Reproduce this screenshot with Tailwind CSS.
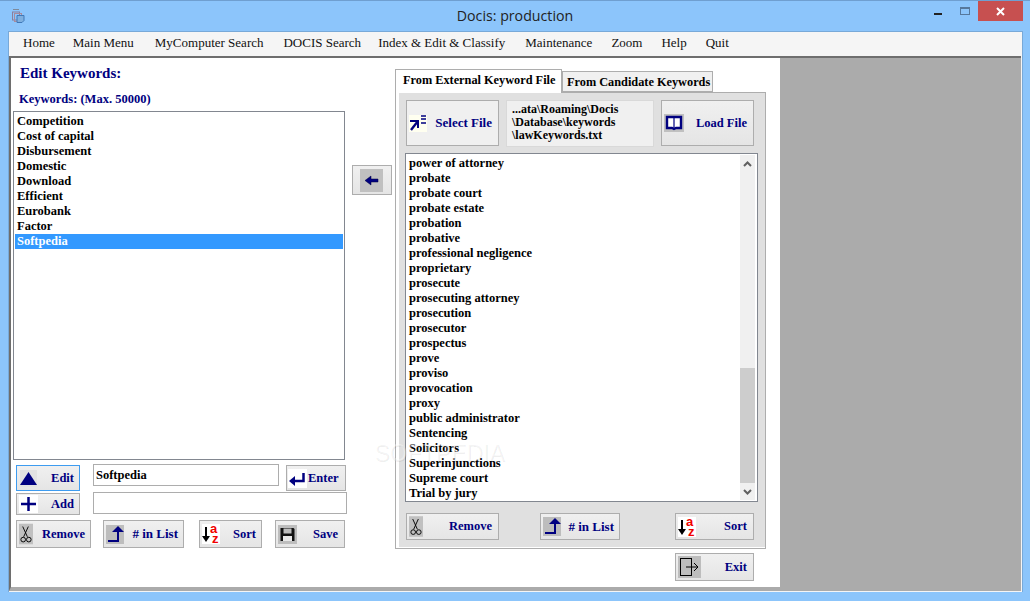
<!DOCTYPE html>
<html>
<head>
<meta charset="utf-8">
<script src="https://cdn.jsdelivr.net/npm/@tailwindcss/browser@4"></script>
</head>
<body class="m-0">
<div class="relative w-[1030px] h-[601px] overflow-hidden bg-[#8cc5fb] font-['Liberation_Serif',serif] flex flex-col">
  <!-- title bar -->
  <div class="relative h-[31px] shrink-0 flex items-center justify-center border-t border-[#6f9fd0]">
    <svg class="absolute left-[12px] top-[8px]" width="13" height="14" viewBox="0 0 13 14" fill="none"><rect x="0.5" y="3" width="7" height="8" stroke="#8a7f9c"/><rect x="2.5" y="4.5" width="7" height="8" stroke="#a88a9c"/><path d="M5 6.5h7v5l-2 2H5z" fill="#7eb0e0" stroke="#3f78b8"/><path d="M1 0.5h6" stroke="#7d8a9c"/></svg>
    <span class="font-['Open_Sans',sans-serif] text-[14.2px] text-[#222] -mt-[1px]">Docis: production</span>
    <div class="absolute left-[934px] top-[12px] w-[8px] h-[2px] bg-[#222]"></div>
    <div class="absolute left-[960px] top-[6px] w-[10px] h-[8px] border border-[#56789c] border-t-2"></div>
    <div class="absolute left-[978px] top-0 w-[45px] h-[20px] bg-[#c75050] flex items-center justify-center">
      <svg width="9" height="9" viewBox="0 0 9 9"><path d="M1 1l7 7M8 1L1 8" stroke="#fff" stroke-width="2"/></svg>
    </div>
  </div>
  <!-- client -->
  <div class="ml-[8px] w-[1015px] h-[561px] shrink-0 bg-white border-t border-l border-r border-[#78a9d8] flex flex-col">
    <!-- menu -->
    <div class="h-[24px] shrink-0 bg-[#f5f5f5] flex items-center pl-[14px] pb-[2px] text-[13px] text-[#111]">
      <span>Home</span>
      <span class="ml-[18px]">Main Menu</span>
      <span class="ml-[21px]">MyComputer Search</span>
      <span class="ml-[20px]">DOCIS Search</span>
      <span class="ml-[17px]">Index &amp; Edit &amp; Classify</span>
      <span class="ml-[20px]">Maintenance</span>
      <span class="ml-[19px]">Zoom</span>
      <span class="ml-[19px]">Help</span>
      <span class="ml-[19px]">Quit</span>
    </div>
    <div class="flex-1 min-h-0 flex flex-col pr-[1px] pb-[1px] bg-[#f5f5f5]">
      <div class="flex-1 min-h-0 flex border-t-2 border-l-2 border-[#6e6e6e] border-b-4 border-b-[#ababab] bg-white">
        <!-- left column -->
        <div class="w-[339px] shrink-0 flex flex-col pl-[2px]">
          <div class="pl-[7px] h-[29px] pt-[5px] text-[15px] leading-[20px] font-bold text-[#000080]">Edit Keywords:</div>
          <div class="pl-[6px] h-[24px] pt-[4px] text-[12.5px] leading-[16px] font-bold text-[#000080]">Keywords: (Max. 50000)</div>
          <div class="w-[332px] h-[349px] border border-[#828790] pt-[2px] px-[1px] text-[12.5px] font-bold text-black leading-[15px]">
            <div class="h-[15px] pl-[2px]">Competition</div>
            <div class="h-[15px] pl-[2px]">Cost of capital</div>
            <div class="h-[15px] pl-[2px]">Disbursement</div>
            <div class="h-[15px] pl-[2px]">Domestic</div>
            <div class="h-[15px] pl-[2px]">Download</div>
            <div class="h-[15px] pl-[2px]">Efficient</div>
            <div class="h-[15px] pl-[2px]">Eurobank</div>
            <div class="h-[15px] pl-[2px]">Factor</div>
            <div class="h-[15px] pl-[2px] bg-[#3399ff] text-white">Softpedia</div>
          </div>
          <div class="flex mt-[4px] h-[27px] pl-[3px] items-start">
            <button class="w-[64px] h-[26px] mt-[1px] border border-[#3e9cf0] bg-gradient-to-b from-[#f0f0f0] to-[#e5e5e5] flex items-center pl-[3px] pr-[5px] justify-between text-[12.5px] font-bold text-[#000080]">
              <svg width="17" height="17" viewBox="0 0 17 17"><rect width="17" height="17" fill="#e2e2e2"/><path d="M8.5 2L17 15H0z" fill="#000080"/></svg><span>Edit</span>
            </button>
            <div class="ml-[13px] w-[186px] h-[22px] border border-[#adadad] bg-white pl-[2px] text-[12.5px] leading-[20px] font-bold text-black">Softpedia</div>
            <button class="ml-[7px] w-[60px] h-[26px] mt-[1px] border border-[#adadad] bg-gradient-to-b from-[#f0f0f0] to-[#e5e5e5] flex items-center pl-[1px] text-[12.5px] font-bold text-[#000080]">
              <svg width="19" height="19" viewBox="0 0 19 19"><rect width="19" height="19" fill="#fff"/><path d="M15.5 4v8H5" fill="none" stroke="#000080" stroke-width="2.5"/><path d="M1 12l6-5v10z" fill="#000080"/></svg><span class="ml-[1px]">Enter</span>
            </button>
          </div>
          <div class="flex mt-[1px] h-[23px] pl-[3px] items-start">
            <button class="w-[64px] h-[22px] mt-[1px] border border-[#adadad] bg-gradient-to-b from-[#f0f0f0] to-[#e5e5e5] flex items-center pl-[2px] pr-[5px] justify-between text-[12.5px] font-bold text-[#000080]">
              <svg width="19" height="18" viewBox="0 0 19 18"><rect width="19" height="18" fill="#fff"/><path d="M9.5 2v14M2 9h15" stroke="#000080" stroke-width="2.5"/></svg><span>Add</span>
            </button>
            <div class="ml-[13px] w-[254px] h-[22px] border border-[#adadad] bg-white"></div>
          </div>
          <div class="flex mt-[5px] pl-[3px] items-start">
            <button class="w-[75px] h-[28px] border border-[#adadad] bg-gradient-to-b from-[#f0f0f0] to-[#e5e5e5] flex items-center pl-[2px] pr-[5px] justify-between text-[12.5px] font-bold text-[#000080]">
              <svg width="14" height="22" viewBox="0 0 15 22"><rect width="15" height="22" fill="#c0c0c0"/><path d="M4 3l5 11M10 3L5 14" stroke="#000" fill="none"/><circle cx="4.5" cy="17" r="2.5" fill="none" stroke="#000"/><circle cx="10.5" cy="17" r="2.5" fill="none" stroke="#000"/></svg><span>Remove</span>
            </button>
            <button class="ml-[12px] w-[81px] h-[28px] border border-[#adadad] bg-gradient-to-b from-[#f0f0f0] to-[#e5e5e5] flex items-center pl-[2px] pr-[5px] justify-between text-[13px] font-bold text-[#000080]">
              <svg width="18" height="19" viewBox="0 0 18 19"><rect width="18" height="19" fill="#bdbdbd"/><path d="M2 16h10V5" fill="none" stroke="#000080" stroke-width="2"/><path d="M12 1l6 6H6z" fill="#000080"/></svg><span># in List</span>
            </button>
            <button class="ml-[15px] w-[63px] h-[28px] border border-[#adadad] bg-gradient-to-b from-[#f0f0f0] to-[#e5e5e5] flex items-center pl-[2px] pr-[5px] justify-between text-[12.5px] font-bold text-[#000080]">
              <svg class="overflow-visible" width="18" height="20" viewBox="0 0 18 20"><rect width="18" height="20" fill="#fff"/><path d="M4 3v11" stroke="#000" stroke-width="2"/><path d="M0 12h8l-4 6z" fill="#000"/><text x="8" y="9" font-size="13" font-weight="700" font-family="Liberation Sans" fill="#f00000">a</text><text x="10" y="19" font-size="13" font-weight="700" font-family="Liberation Sans" fill="#f00000">z</text></svg><span>Sort</span>
            </button>
            <button class="ml-[13px] w-[70px] h-[28px] border border-[#adadad] bg-gradient-to-b from-[#f0f0f0] to-[#e5e5e5] flex items-center pl-[2px] pr-[6px] justify-between text-[12.5px] font-bold text-[#000080]">
              <svg width="19" height="19" viewBox="0 0 19 19"><rect width="19" height="19" fill="#bdbdbd"/><path d="M2.5 3h13l1 1v12h-14z" fill="#111"/><rect x="5.5" y="3.5" width="8" height="5" fill="#bdbdbd"/><rect x="5" y="11" width="9" height="5" fill="#e8e8e8"/></svg><span>Save</span>
            </button>
          </div>
        </div>
        <!-- transfer button -->
        <div class="w-[43px] shrink-0 flex justify-center pt-[107px]">
          <button class="w-[40px] h-[30px] border border-[#adadad] bg-gradient-to-b from-[#f0f0f0] to-[#e5e5e5] flex items-center justify-center">
            <svg width="23" height="23" viewBox="0 0 23 23"><rect width="23" height="23" fill="#c0c0c0"/><path d="M5 11.5l6-4.5v3h7v3h-7v3z" fill="#000080" stroke="#000040" stroke-width="0.5"/></svg>
          </button>
        </div>
        <!-- right panel -->
        <div class="w-[387px] shrink-0 pl-[2px] flex flex-col pt-[11px]">
          <div class="flex items-end h-[23px]">
            <div class="w-[167px] h-[24px] -mb-[1px] relative z-10 border border-[#adadad] border-b-0 bg-white pl-[7px] text-[12.3px] leading-[20px] font-bold text-black whitespace-nowrap">From External Keyword File</div>
            <div class="w-[151px] h-[21px] border border-[#adadad] bg-[#f0f0f0] pl-[4px] text-[12.3px] leading-[20px] font-bold text-black whitespace-nowrap">From Candidate Keywords</div>
          </div>
          <div class="w-[371px] h-[457px] border border-[#adadad] pl-[3px] pb-[1px]">
            <div class="bg-[#e0e0e0] h-full flex flex-col pl-[6px]">
              <div class="flex pt-[7px] items-start">
                <button class="ml-[1px] w-[93px] h-[46px] border border-[#adadad] bg-[#f0f0f0] flex items-center pl-[2px] pr-[6px] justify-between text-[13px] font-bold text-[#000080]">
                  <svg width="18" height="17" viewBox="0 0 18 17"><rect width="18" height="17" fill="#fffff0"/><path d="M12 4h5M12 8h5M12 1h5" stroke="#000080" stroke-width="1.6"/><path d="M1 6h8v7" fill="none" stroke="#000080" stroke-width="2"/><path d="M9 6L2 15" stroke="#000080" stroke-width="2.4"/></svg><span>Select File</span>
                </button>
                <div class="ml-[7px] w-[148px] h-[47px] border border-[#d9d9d9] bg-[#f0f0f0] pl-[5px] pt-[2px] text-[12px] leading-[13px] font-bold text-black">...ata\Roaming\Docis<br>\Database\keywords<br>\lawKeywords.txt</div>
                <button class="ml-[7px] w-[93px] h-[46px] border border-[#adadad] bg-gradient-to-b from-[#f0f0f0] to-[#e5e5e5] flex items-center pl-[2px] pr-[6px] justify-between text-[12.5px] font-bold text-[#000080]">
                  <svg width="20" height="18" viewBox="0 0 20 18"><rect width="20" height="18" fill="#c0c0c0"/><path d="M3 3h7h7v11h-5l-2 1-2-1H3z" fill="#fff" stroke="#000080" stroke-width="2.4"/><path d="M10 3v11" stroke="#000080" stroke-width="1.2"/></svg><span>Load File</span>
                </button>
              </div>
              <div class="mt-[6px] w-[353px] h-[349px] border border-[#828790] bg-white flex">
                <div class="flex-1 pl-[3px] pt-[2px] text-[12.5px] leading-[15px] font-bold text-black">
                  <div>power of attorney</div><div>probate</div><div>probate court</div><div>probate estate</div><div>probation</div><div>probative</div><div>professional negligence</div><div>proprietary</div><div>prosecute</div><div>prosecuting attorney</div><div>prosecution</div><div>prosecutor</div><div>prospectus</div><div>prove</div><div>proviso</div><div>provocation</div><div>proxy</div><div>public administrator</div><div>Sentencing</div><div>Solicitors</div><div>Superinjunctions</div><div>Supreme court</div><div>Trial by jury</div>
                </div>
                <div class="w-[15px] mr-[2px] mt-[1px] mb-[1px] bg-[#f0f0f0] flex flex-col items-center">
                  <div class="h-[17px] flex items-center justify-center"><svg width="9" height="6" viewBox="0 0 9 6"><path d="M1 5l3.5-3.5L8 5" fill="none" stroke="#606060" stroke-width="2"/></svg></div>
                  <div class="h-[196px]"></div>
                  <div class="w-full h-[115px] bg-[#cdcdcd]"></div>
                  <div class="h-[17px] flex items-center justify-center"><svg width="9" height="6" viewBox="0 0 9 6"><path d="M1 1l3.5 3.5L8 1" fill="none" stroke="#606060" stroke-width="2"/></svg></div>
                </div>
              </div>
              <div class="flex mt-[11px] items-start">
                <button class="ml-[1px] w-[93px] h-[27px] border border-[#adadad] bg-gradient-to-b from-[#f0f0f0] to-[#e5e5e5] flex items-center pl-[2px] pr-[6px] justify-between text-[12.5px] font-bold text-[#000080]">
                  <svg width="14" height="21" viewBox="0 0 15 22"><rect width="15" height="22" fill="#c0c0c0"/><path d="M4 3l5 11M10 3L5 14" stroke="#000" fill="none"/><circle cx="4.5" cy="17" r="2.5" fill="none" stroke="#000"/><circle cx="10.5" cy="17" r="2.5" fill="none" stroke="#000"/></svg><span>Remove</span>
                </button>
                <button class="ml-[41px] w-[80px] h-[27px] border border-[#adadad] bg-gradient-to-b from-[#f0f0f0] to-[#e5e5e5] flex items-center pl-[2px] pr-[5px] justify-between text-[13px] font-bold text-[#000080]">
                  <svg width="18" height="19" viewBox="0 0 18 19"><rect width="18" height="19" fill="#bdbdbd"/><path d="M2 16h10V5" fill="none" stroke="#000080" stroke-width="2"/><path d="M12 1l6 6H6z" fill="#000080"/></svg><span># in List</span>
                </button>
                <button class="ml-[55px] w-[79px] h-[27px] border border-[#adadad] bg-gradient-to-b from-[#f0f0f0] to-[#e5e5e5] flex items-center pl-[2px] pr-[6px] justify-between text-[12.5px] font-bold text-[#000080]">
                  <svg class="overflow-visible" width="18" height="20" viewBox="0 0 18 20"><rect width="18" height="20" fill="#fff"/><path d="M4 3v11" stroke="#000" stroke-width="2"/><path d="M0 12h8l-4 6z" fill="#000"/><text x="8" y="9" font-size="13" font-weight="700" font-family="Liberation Sans" fill="#f00000">a</text><text x="10" y="19" font-size="13" font-weight="700" font-family="Liberation Sans" fill="#f00000">z</text></svg><span>Sort</span>
                </button>
              </div>
            </div>
          </div>
          <div class="w-[371px] flex justify-end pr-[12px] mt-[4px]">
            <button class="w-[79px] h-[28px] border border-[#adadad] bg-gradient-to-b from-[#f0f0f0] to-[#e5e5e5] flex items-center pl-[2px] pr-[6px] justify-between text-[12.5px] font-bold text-[#000080]">
              <svg width="23" height="22" viewBox="0 0 23 22"><rect width="23" height="22" fill="#bdbdbd"/><rect x="2.5" y="2.5" width="11" height="17" fill="none" stroke="#000"/><path d="M8 11h12M16 7l4 4-4 4" fill="none" stroke="#000"/></svg><span>Exit</span>
            </button>
          </div>
        </div>
        <!-- grey area -->
        <div class="flex-1 bg-[#ababab]"></div>
      </div>
    </div>
  </div>
  <div class="absolute left-[374px] top-[441px] text-[23px] leading-[24px] font-['Liberation_Sans',sans-serif] text-white/40 [text-shadow:1px_1px_0_rgba(0,0,0,0.07)]">SOFTPEDIA</div>
</div>
</body>
</html>
